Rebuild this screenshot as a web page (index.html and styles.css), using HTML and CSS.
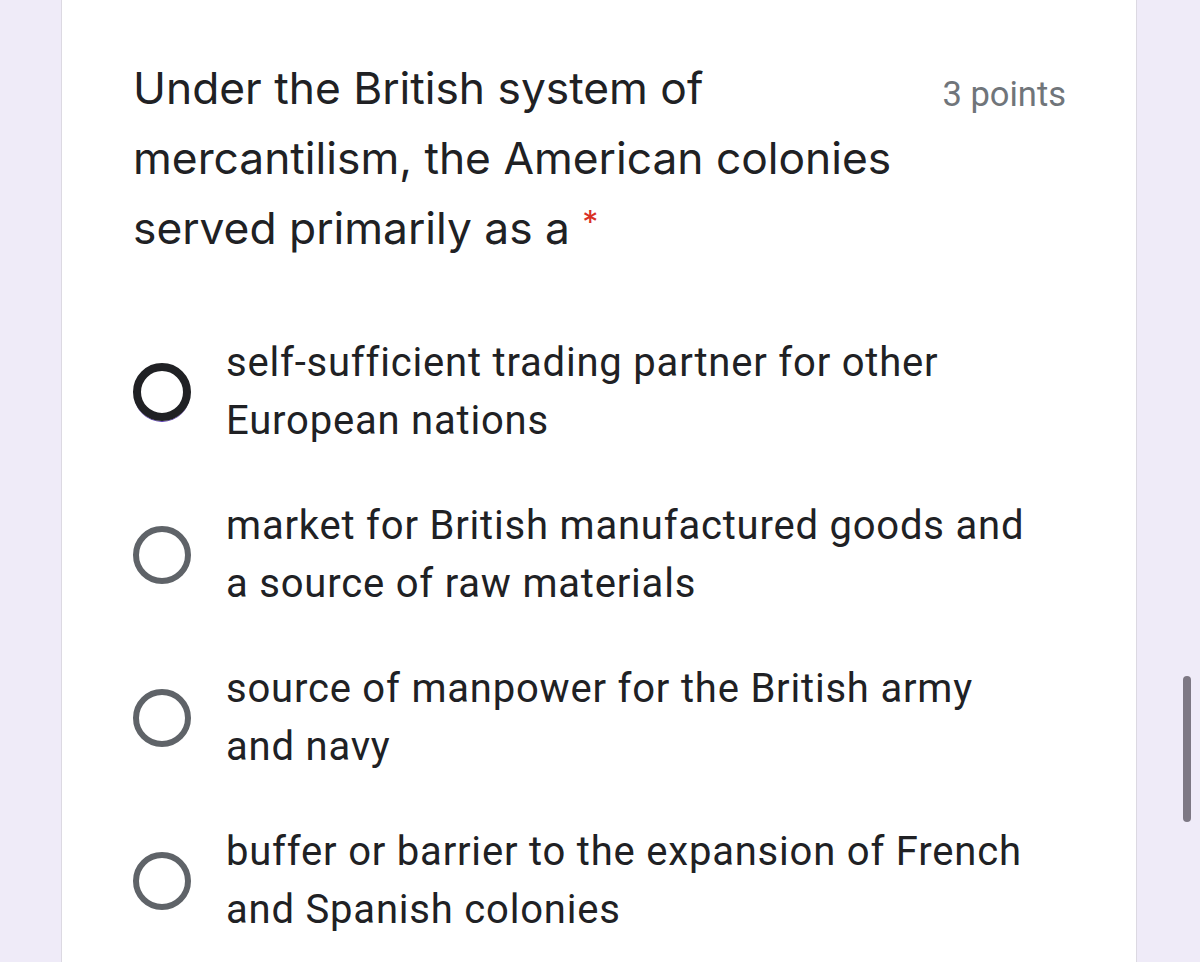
FILE: index.html
```html
<!DOCTYPE html>
<html lang="en">
<head>
<meta charset="utf-8">
<title>Question</title>
<link rel="stylesheet" href="styles.css">
</head>
<body>
<div class="page">
  <div class="card">
    <div class="q-head">
      <div class="q-title">Under the British system of mercantilism, the American colonies served primarily as a <span class="req">*</span></div>
      <div class="q-points">3 points</div>
    </div>
    <div class="options">
      <div class="option">
        <span class="radio radio-active"></span>
        <div class="opt-text">self-sufficient trading partner for other European nations</div>
      </div>
      <div class="option">
        <span class="radio"></span>
        <div class="opt-text">market for British manufactured goods and a source of raw materials</div>
      </div>
      <div class="option">
        <span class="radio"></span>
        <div class="opt-text">source of manpower for the British army and navy</div>
      </div>
      <div class="option">
        <span class="radio"></span>
        <div class="opt-text">buffer or barrier to the expansion of French and Spanish colonies</div>
      </div>
    </div>
  </div>
  <div class="scrollbar"></div>
</div>
</body>
</html>
```
FILE: styles.css
```css
html, body {
  margin: 0;
  padding: 0;
  background: #efebf8;
  height: 100%;
  overflow: hidden;
}
.page {
  position: relative;
  height: 962px;
}
.card {
  margin-left: 61px;
  margin-top: -14px;
  width: 1076px;
  height: 990px;
  box-sizing: border-box;
  background: #fff;
  border: 1px solid #dcd9e2;
  border-radius: 14px;
  padding: 66px 70px 0 71px;
}
.q-head {
  display: flex;
  justify-content: space-between;
  align-items: flex-start;
}
.q-title {
  width: 790px;
  font-family: Inter, sans-serif;
  font-size: 44.3px;
  line-height: 70px;
  color: #202124;
}
.req {
  color: #d93025;
  font-size: 32px;
  line-height: 0;
  vertical-align: 10px;
}
.q-points {
  font-family: Roboto, sans-serif;
  font-size: 34.5px;
  line-height: 70px;
  color: #70757a;
  padding-top: 6px;
}
.options {
  margin-top: 71px;
  display: flex;
  flex-direction: column;
  gap: 47px;
}
.option {
  display: flex;
  align-items: center;
}
.radio {
  flex: none;
  width: 46px;
  height: 46px;
  border: 6px solid #5f6368;
  border-radius: 50%;
  margin-right: 35px;
}
.radio-active {
  border: 8px solid #202124;
  width: 42px;
  height: 42px;
  box-shadow: 0 2px 0 -1px #5b3bb5;
}
.opt-text {
  width: 810px;
  font-family: Roboto, sans-serif;
  font-size: 40px;
  letter-spacing: 0.8px;
  line-height: 58px;
  color: #202124;
}
.scrollbar {
  position: absolute;
  left: 1183px;
  top: 690px;
  width: 8px;
  height: 146px;
  border-radius: 4px;
  background: #7d7884;
}
```
